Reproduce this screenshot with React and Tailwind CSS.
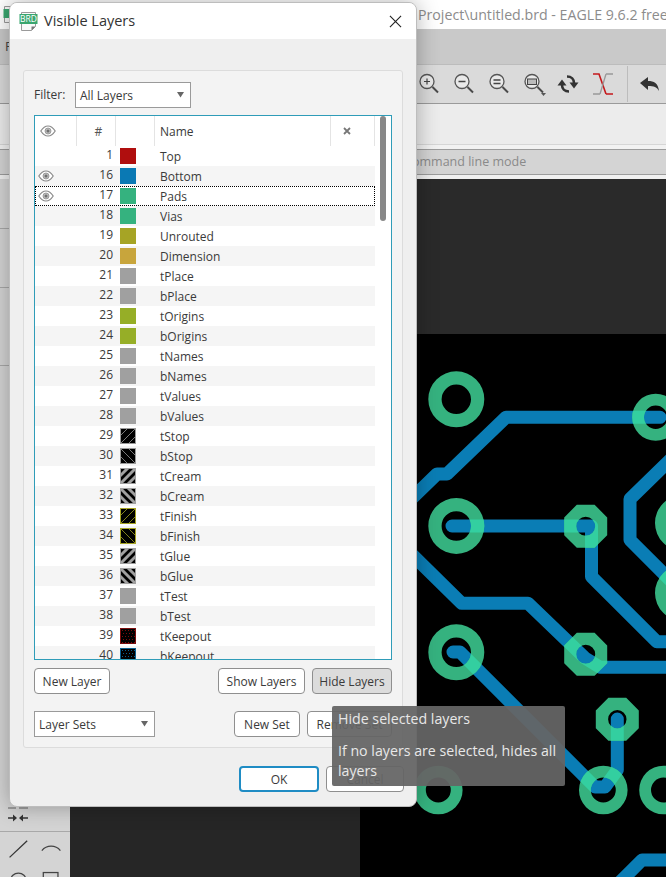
import React from "react";

const FONT = "[font-family:'Open_Sans','Noto_Sans',sans-serif]";

const rows = [
  [1, "Top", "#b00e0e"], [16, "Bottom", "#0a79b4", 1], [17, "Pads", "#35b27f", 1], [18, "Vias", "#35b27f"],
  [19, "Unrouted", "#a6a425"], [20, "Dimension", "#c8a53c"], [21, "tPlace", "#a0a0a0"], [22, "bPlace", "#a0a0a0"],
  [23, "tOrigins", "#96ae27"], [24, "bOrigins", "#96ae27"], [25, "tNames", "#a0a0a0"], [26, "bNames", "#a0a0a0"],
  [27, "tValues", "#a0a0a0"], [28, "bValues", "#a0a0a0"], [29, "tStop", "thin-f", "#9a9a9a"], [30, "bStop", "thin-b", "#9a9a9a"],
  [31, "tCream", "thick-f", "#a0a0a0"], [32, "bCream", "thick-b", "#a0a0a0"], [33, "tFinish", "thin-f", "#a6a425"], [34, "bFinish", "thin-b", "#a6a425"],
  [35, "tGlue", "thick-f", "#a0a0a0"], [36, "bGlue", "thick-b", "#a0a0a0"], [37, "tTest", "#a0a0a0"], [38, "bTest", "#a0a0a0"],
  [39, "tKeepout", "dots", "#7a0c0c"], [40, "bKeepout", "dots", "#0a5f90"],
];

function Eye({ className }) {
  return (
    <svg viewBox="0 0 16 12" className={className}>
      <path d="M0.8 6C3 2.6 5.4 1 8 1s5 1.6 7.2 5c-2.2 3.4-4.6 5-7.2 5S3 9.4 0.8 6Z" fill="#fff" stroke="#8a8a8a" strokeWidth="1.2" />
      <circle cx="8" cy="6" r="3" fill="#bdbdbd" stroke="#8f8f8f" strokeWidth="0.8" />
      <circle cx="8" cy="6" r="1.5" fill="#707070" />
    </svg>
  );
}

function Swatch({ kind, color }) {
  if (kind && kind[0] === "#") return <div className="h-4 w-4" style={{ background: kind }} />;
  if (kind === "dots") {
    const dots = [];
    for (let y = 2; y < 16; y += 3) for (let x = 2 + (y % 2); x < 16; x += 3) dots.push(<rect key={x + "-" + y} x={x} y={y} width="1" height="1" fill={color} />);
    return (
      <svg viewBox="0 0 16 16" className="h-4 w-4 block">
        <rect x="0.5" y="0.5" width="15" height="15" fill="#000" stroke={color} />
        {dots}
      </svg>
    );
  }
  const [w, dir] = kind.split("-");
  const sw = w === "thin" ? 0.8 : 3;
  const lines = w === "thin" ? [-8, 0, 8] : [-16, -8, 0, 8, 16];
  return (
    <svg viewBox="0 0 16 16" className="h-4 w-4 block">
      <defs>
        <clipPath id={"c" + kind + color.slice(1)}><rect width="16" height="16" /></clipPath>
      </defs>
      <rect x="0.5" y="0.5" width="15" height="15" fill="#000" stroke={color} />
      <g clipPath={"url(#c" + kind + color.slice(1) + ")"}>
        {lines.map((o) =>
          dir === "f" ? (
            <line key={o} x1={o} y1="16" x2={16 + o} y2="0" stroke={color} strokeWidth={sw} />
          ) : (
            <line key={o} x1={o} y1="0" x2={16 + o} y2="16" stroke={color} strokeWidth={sw} />
          )
        )}
      </g>
    </svg>
  );
}

function Row({ n, name, kind, color, eye, index }) {
  const selected = n === 17;
  return (
    <div className={"flex h-5 w-[340px] items-center text-[12px] text-[#3a3a3a] " + (index % 2 ? "bg-[#f5f5f5] " : "bg-white ") + (selected ? "outline-1 outline-dotted -outline-offset-1 outline-black" : "")}>
      <div className="flex w-[42px] justify-center pr-[21px]">{eye ? <Eye className="h-3 w-4" /> : null}</div>
      <div className="w-[36px] pb-[2px] text-right leading-4">{n}</div>
      <div className="flex w-[42px] justify-end pr-[19px]"><Swatch kind={kind} color={color} /></div>
      <div className="pl-[5px] pt-[2px] leading-4">{name}</div>
    </div>
  );
}

function Btn({ children, className = "" }) {
  return (
    <div className={"flex h-[26px] items-center justify-center rounded-[4px] border border-[#8f8f8f] bg-white pt-[2px] text-[12px] text-[#3a3a3a] " + className}>{children}</div>
  );
}

function Combo({ children, className = "" }) {
  return (
    <div className={"flex h-[26px] items-center justify-between border border-[#9a9a9a] bg-white pl-[4px] pr-[5px] text-[12px] text-[#3a3a3a] " + className}>
      <span className="pt-[2px]">{children}</span>
      <svg viewBox="0 0 8 6" className="h-[6px] w-2"><path d="M0 0h7L3.5 5.5Z" fill="#666" /></svg>
    </div>
  );
}

function Mag({ kind }) {
  return (
    <svg viewBox="0 0 24 24" className="h-6 w-6 block">
      <circle cx="10" cy="9.5" r="7" fill="#e9e9e9" stroke="#555" strokeWidth="1.3" />
      <line x1="15.5" y1="15" x2="21" y2="20.5" stroke="#4a4a4a" strokeWidth="2" />
      {kind === "plus" && <path d="M7 9.5h6M10 6.5v6" stroke="#444" strokeWidth="1.2" />}
      {kind === "minus" && <path d="M6.5 9.5h7" stroke="#444" strokeWidth="1.5" />}
      {kind === "eq" && <path d="M6.5 8h7M6.5 11.5h7" stroke="#444" strokeWidth="1.3" />}
      {kind === "sel" && (
        <>
          <rect x="5.5" y="7" width="9" height="5.5" fill="#bbb" stroke="#444" />
          <path d="M19 21h5l-2.5 3Z" fill="#555" />
        </>
      )}
    </svg>
  );
}

function Refresh() {
  return (
    <svg viewBox="0 0 24 24" className="h-6 w-6 block">
      <path d="M13 19.5C8.5 19.5 6 16.5 6 13" fill="none" stroke="#333" strokeWidth="2.6" />
      <path d="M1.5 13.5h9L6 7.5Z" fill="#333" />
      <path d="M11 4.5C15.5 4.5 18 7.5 18 11" fill="none" stroke="#333" strokeWidth="2.6" />
      <path d="M13.5 10.5h9L18 16.5Z" fill="#333" />
    </svg>
  );
}

function Ratsnest() {
  return (
    <svg viewBox="0 0 22 24" className="h-6 w-[22px] block">
      <path d="M1 22h7M14 2h7" stroke="#999" strokeWidth="1.4" fill="none" />
      <path d="M14 22 L7 2 H1 M14 22 h7" stroke="#c5191c" strokeWidth="1.6" fill="none" />
      <path d="M8 22 L14 2" stroke="#999" strokeWidth="1.3" fill="none" />
    </svg>
  );
}

function Undo() {
  return (
    <svg viewBox="0 0 22 16" className="h-4 w-[22px] block">
      <path d="M1 7 9 1v4c6 0 10 2 11 10-2-4-5-5-11-5v4Z" fill="#333" />
    </svg>
  );
}

const ringC = (x, y, R, r) => {
  const c = (q) => `M${x - q} ${y}a${q} ${q} 0 1 0 ${2 * q} 0a${q} ${q} 0 1 0 ${-2 * q} 0Z`;
  return c(R) + c(r);
};
const ringO = (x, y, R, r) => {
  const k = R * 0.4142;
  const o = `M${x - k} ${y - R}H${x + k}L${x + R} ${y - k}V${y + k}L${x + k} ${y + R}H${x - k}L${x - R} ${y + k}V${y - k}Z`;
  const c = `M${x - r} ${y}a${r} ${r} 0 1 0 ${2 * r} 0a${r} ${r} 0 1 0 ${-2 * r} 0Z`;
  return o + c;
};

const padsPath = [
  ringC(456.3, 399.3, 28, 14.7), ringC(456.3, 526, 28, 14.7), ringC(456.3, 652.3, 28, 14.7),
  ringC(655.7, 417.3, 23.5, 11.7), ringC(603.3, 790, 24.3, 12.5), ringC(438.3, 790, 24.3, 12.5),
  ringC(663.5, 790, 24.3, 12.5), ringC(683, 523, 28, 14.7), ringC(683, 593, 28, 14.7),
  ringO(585.7, 526.3, 21.5, 9.5), ringO(585.7, 654.3, 21.5, 9.5), ringO(617.3, 719.3, 21.5, 9.2),
].join("");

const traces = [
  "M660 417.3H506L447 474H437L400 510",
  "M452 526H591.5V576.7L656.7 641.7H672",
  "M380 523L461.7 603.3H528L585 658L600 667.3H672",
  "M453 652H460L595 787H605L617.3 770V719",
  "M672 458L630 499V540L672 582",
  "M618 884L642 860H672",
];

function Pcb() {
  const t = (color) =>
    traces.map((d) => <path key={d} d={d} fill="none" stroke={color} strokeWidth="13" strokeLinecap="round" strokeLinejoin="round" />);
  return (
    <svg viewBox="360 334 306 543" className="h-[543px] w-[306px] block bg-black">
      <defs>
        <clipPath id="padclip"><path d={padsPath} clipRule="evenodd" /></clipPath>
      </defs>
      {t("#0a7db5")}
      <path d={padsPath} fill="#35b27f" fillRule="evenodd" />
      <g clipPath="url(#padclip)">{t("#33cfa0")}</g>
    </svg>
  );
}

export default function App() {
  return (
    <div className={"relative flex h-[877px] w-[666px] flex-col overflow-hidden bg-white " + FONT}>
      {/* main window */}
      <div className="flex h-[29px] items-center overflow-hidden whitespace-nowrap pl-[3px] text-[14.2px] text-[#8c8c8c]">
        <svg viewBox="0 0 17 19" className="mr-[398px] h-[19px] w-[17px] shrink-0 block">
          <path d="M1.5 1.5h13v16h-13Z" fill="#fafafa" stroke="#9a9a9a" />
          <rect x="0.5" y="4" width="16" height="9" fill="#3aa66f" />
        </svg>
        <span>Project\untitled.brd - EAGLE 9.6.2 free</span>
      </div>
      <div className="flex h-[35px] items-center bg-[#c9c9c9] pl-[5px] text-[13px] text-[#444]">File</div>
      <div className="flex h-[40px] items-center gap-[11px] border-y border-b-[#9a9a9a] border-t-[#bcbcbc] bg-[#dadada] pl-[417px]">
        <Mag kind="plus" />
        <Mag kind="minus" />
        <Mag kind="eq" />
        <Mag kind="sel" />
        <div className="-ml-px"><Refresh /></div>
        <div className="ml-px"><Ratsnest /></div>
        <div className="ml-[2px] h-[36px] w-px bg-[#bcbcbc]" />
        <Undo />
      </div>
      <div className="h-[41px] border-b border-[#d6d6d6] bg-[#ececec]" />
      <div className="h-[4px] bg-[#f2f2f2]" />
      <div className="flex h-[26px] items-center border-y border-[#9c9c9c] bg-[#d4d4d4] pl-[406px] text-[12.5px] text-[#8a8a8a]">command line mode</div>
      <div className="h-[4px] bg-[#f0f0f0]" />
      <div className="flex min-h-0 flex-1">
        <div className="flex w-[70px] flex-col bg-[#d4d4d4]">
          <div className="h-[50px] border-b border-[#a8a8a8]" />
          <div className="h-[59px] border-b border-[#a8a8a8]" />
          <div className="h-[78px] border-b border-[#a8a8a8]" />
          <div className="flex h-[467px] flex-col justify-end border-b border-[#a8a8a8]">
            <svg viewBox="0 0 70 30" className="h-[30px] w-[70px] block">
              <path d="M8 7h8M19 7h9" stroke="#9c9c9c" strokeWidth="2" />
              <path d="M8 17h6M28 17h-6" stroke="#333" strokeWidth="1.3" />
              <path d="M13 13.5l4 3.5-4 3.5ZM23 13.5l-4 3.5 4 3.5Z" fill="#333" />
            </svg>
          </div>
          <svg viewBox="0 0 70 46" className="h-[45px] w-[70px] block">
            <path d="M9 26 27 9" stroke="#333" strokeWidth="1.3" />
            <path d="M42 19c5-6 14-6 19 0" fill="none" stroke="#444" strokeWidth="1.3" />
            <circle cx="18" cy="50" r="8" fill="none" stroke="#444" strokeWidth="1.3" />
            <rect x="43.5" y="41.5" width="15" height="15" fill="none" stroke="#444" strokeWidth="1.3" />
          </svg>
        </div>
        <div className="flex flex-1 flex-col">
          <div className="h-[155px] bg-[#2a2a2a]" />
          <div className="flex flex-1">
            <div className="w-[290px] bg-[#262626]" />
            <Pcb />
          </div>
        </div>
      </div>

      {/* dialog */}
      <div className="absolute left-[9px] top-[2px] flex h-[805px] w-[408px] flex-col overflow-hidden rounded-[8px] border border-[#bdbdbd] bg-[#efefef] shadow-[0_0_22px_rgba(0,0,0,0.3)]">
        <div className="flex h-[36px] items-center bg-white pl-[9px] pr-[14px]">
          <svg viewBox="0 0 19 21" className="h-[21px] w-[19px] shrink-0 block">
            <path d="M2.5 1.5h14v14l-4 4h-10Z" fill="#fafafa" stroke="#9a9a9a" />
            <path d="M12.5 19.5v-4h4Z" fill="#777" />
            <rect x="0.5" y="3" width="18" height="10" fill="#3aa66f" />
            <text x="9.5" y="11.3" textAnchor="middle" fontSize="8.5" fill="#fff" fontFamily="'Open Sans',sans-serif">BRD</text>
          </svg>
          <div className="ml-[6px] flex-1 text-[14.5px] text-[#333]">Visible Layers</div>
          <svg viewBox="0 0 14 14" className="h-[13px] w-[13px] block"><path d="M1 1l12 12M13 1 1 13" stroke="#222" strokeWidth="1.2" /></svg>
        </div>
        <div className="mx-[13px] mt-[31px] flex h-[678px] flex-col rounded-[3px] border border-[#dcdcdc] bg-[#f3f3f3] px-[10px] pt-[11px]">
          <div className="flex items-center">
            <span className="w-[41px] text-[12px] text-[#3a3a3a]">Filter:</span>
            <Combo className="w-[116px]">All Layers</Combo>
          </div>
          <div className="relative mt-[7px] h-[545px] w-[358px] overflow-hidden border border-[#2f9cb8] bg-white">
            <div className="flex h-[30px] w-[340px] text-[12px] text-[#3a3a3a]">
              <div className="flex w-[42px] items-center justify-center border-r border-[#e4e4e4] pr-[15px]"><Eye className="h-3 w-4" /></div>
              <div className="flex w-[39px] items-center justify-center border-r border-[#e4e4e4] pl-[5px] pt-[2px] text-[#555]">#</div>
              <div className="w-[39px] border-r border-[#e4e4e4]" />
              <div className="flex w-[176px] items-center border-r border-[#e4e4e4] pl-[5px] pt-[2px]">Name</div>
              <div className="flex w-[44px] items-center justify-center border-r border-[#e4e4e4] pr-[12px]">
                <svg viewBox="0 0 8 8" className="h-2 w-2"><path d="M1 1l6 6M7 1 1 7" stroke="#777" strokeWidth="1.8" /></svg>
              </div>
            </div>
            {rows.map((r, i) => (
              <Row key={r[0]} n={r[0]} name={r[1]} kind={r[2]} color={r[3] === 1 ? "" : r[3]} eye={r[3] === 1} index={i} />
            ))}
            <div className="absolute left-[345px] top-0 h-[105px] w-[6px] rounded-[3px] bg-[#888]" />
          </div>
          <div className="mt-[8px] flex w-[358px] items-center">
            <Btn className="w-[76px]">New Layer</Btn>
            <Btn className="ml-auto w-[87px]">Show Layers</Btn>
            <Btn className="ml-[7px] w-[80px] !bg-[#dcdcdc]">Hide Layers</Btn>
          </div>
          <div className="mt-[17px] flex w-[358px] items-center">
            <Combo className="w-[121px]">Layer Sets</Combo>
            <Btn className="ml-auto w-[66px]">New Set</Btn>
            <Btn className="ml-[7px] w-[85px]">Remove Set</Btn>
          </div>
        </div>
        <div className="mt-[18px] flex items-center justify-end pr-[12px]">
          <Btn className="w-[80px] !border-2 !border-[#1f8cc4]">OK</Btn>
          <Btn className="ml-[7px] w-[78px]">Cancel</Btn>
        </div>
      </div>

      {/* tooltip */}
      <div className="absolute left-[332px] top-[706px] h-[80px] w-[233px] rounded-[2px] bg-[rgba(101,101,101,0.94)] px-[6px] pt-[3px] text-[14.2px] leading-[20px] text-[#e8e8e8]">
        <p>Hide selected layers</p>
        <p className="mt-[12px]">If no layers are selected, hides all layers</p>
      </div>
    </div>
  );
}
